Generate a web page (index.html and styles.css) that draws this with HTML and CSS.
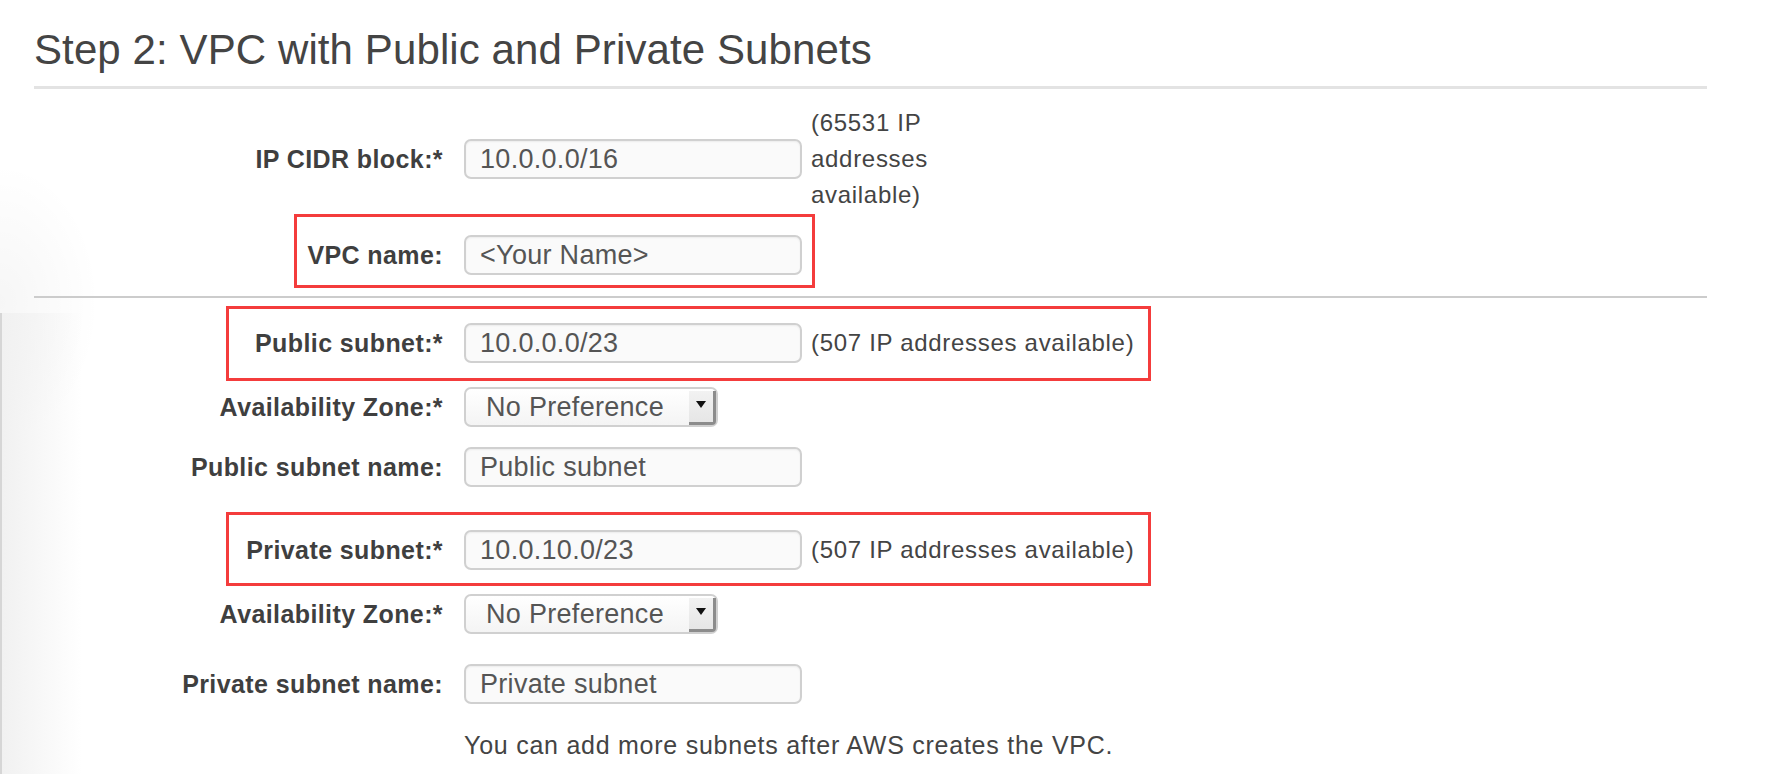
FILE: index.html
```html
<!DOCTYPE html>
<html lang="en">
<head>
<meta charset="utf-8">
<title>Step 2: VPC with Public and Private Subnets</title>
<link rel="stylesheet" href="styles.css">
</head>
<body>
<div class="glow"></div>
<div class="edge"></div>
<main class="page">
  <h1 class="title">Step 2: VPC with Public and Private Subnets</h1>

  <div class="row r1">
    <label class="lbl">IP CIDR block:*</label>
    <input class="field" type="text" value="10.0.0.0/16">
    <span class="hint narrow">(65531 IP addresses available)</span>
  </div>

  <div class="row r2">
    <label class="lbl">VPC name:</label>
    <input class="field" type="text" value="&lt;Your Name&gt;">
    <div class="mark mark-vpc"></div>
  </div>

  <div class="sep"></div>

  <div class="row r3">
    <label class="lbl">Public subnet:*</label>
    <input class="field" type="text" value="10.0.0.0/23">
    <span class="hint">(507 IP addresses available)</span>
    <div class="mark mark-sub"></div>
  </div>

  <div class="row r4">
    <label class="lbl">Availability Zone:*</label>
    <div class="select"><span class="sel-text">No Preference</span><span class="sel-btn"><span class="tri"></span></span></div>
  </div>

  <div class="row r5">
    <label class="lbl">Public subnet name:</label>
    <input class="field" type="text" value="Public subnet">
  </div>

  <div class="row r6">
    <label class="lbl">Private subnet:*</label>
    <input class="field" type="text" value="10.0.10.0/23">
    <span class="hint">(507 IP addresses available)</span>
    <div class="mark mark-sub2"></div>
  </div>

  <div class="row r7">
    <label class="lbl">Availability Zone:*</label>
    <div class="select"><span class="sel-text">No Preference</span><span class="sel-btn"><span class="tri"></span></span></div>
  </div>

  <div class="row r8">
    <label class="lbl">Private subnet name:</label>
    <input class="field" type="text" value="Private subnet">
  </div>

  <p class="note">You can add more subnets after AWS creates the VPC.</p>
</main>
</body>
</html>
```

FILE: styles.css
```css
html, body {
  margin: 0;
  padding: 0;
  background: #ffffff;
}

body {
  position: relative;
  font-family: "Liberation Sans", Arial, Helvetica, sans-serif;
  color: #444444;
  height: 774px;
  overflow: hidden;
}

.glow {
  position: absolute;
  left: 0;
  top: 110px;
  width: 120px;
  height: 320px;
  background: radial-gradient(ellipse 100px 140px at 0% 60%, rgba(0, 0, 0, 0.035), rgba(0, 0, 0, 0) 100%);
  pointer-events: none;
}

.edge {
  position: absolute;
  left: 0;
  top: 313px;
  bottom: 0;
  width: 80px;
  border-left: 2px solid #d6d6d6;
  background: linear-gradient(to right, #f1f1f1 0, rgba(255, 255, 255, 0) 80px);
  pointer-events: none;
}

.page {
  position: relative;
  margin-left: 34px;
  width: 1673px;
}

.title {
  margin: 0;
  padding-top: 26px;
  padding-bottom: 12px;
  font-size: 42px;
  letter-spacing: 0.1px;
  line-height: 48px;
  font-weight: normal;
  color: #444444;
  border-bottom: 3px solid #e3e3e3;
}

.row {
  position: relative;
  display: flex;
  align-items: center;
}

.lbl {
  flex: none;
  width: 409px;
  margin-right: 21px;
  text-align: right;
  font-weight: bold;
  font-size: 25px;
  letter-spacing: 0.4px;
  color: #3f3f3f;
}

.field {
  flex: none;
  box-sizing: border-box;
  width: 338px;
  height: 40px;
  margin: 0;
  padding: 0 0 0 14px;
  border: 2px solid #d0d0d0;
  border-radius: 7px;
  background: #fafafa;
  box-shadow: inset 0 1px 2px rgba(0, 0, 0, 0.06);
  font-family: inherit;
  font-size: 27px;
  letter-spacing: 0.3px;
  color: #555555;
  outline: none;
}

.hint {
  margin-left: 9px;
  font-size: 24px;
  letter-spacing: 0.7px;
  line-height: 36px;
  color: #444444;
  white-space: nowrap;
}

.hint.narrow {
  width: 128px;
  white-space: normal;
}

.select {
  flex: none;
  position: relative;
  box-sizing: border-box;
  width: 254px;
  height: 40px;
  border: 2px solid #d0d0d0;
  border-radius: 7px;
  background: linear-gradient(#ffffff, #f4f4f4);
  display: flex;
  align-items: center;
  justify-content: space-between;
}

.sel-text {
  padding-left: 20px;
  font-size: 27px;
  letter-spacing: 0.3px;
  color: #555555;
}

.sel-btn {
  box-sizing: border-box;
  align-self: stretch;
  width: 27px;
  margin: 2px 0 0 0;
  border-right: 3px solid #8c8c8c;
  border-bottom: 3px solid #8c8c8c;
  border-bottom-right-radius: 4px;
  background: linear-gradient(#f2f2f2, #e6e6e6);
  display: flex;
  justify-content: center;
  padding-top: 10px;
}

.tri {
  width: 0;
  height: 0;
  border-left: 5px solid transparent;
  border-right: 5px solid transparent;
  border-top: 7px solid #111111;
}

.mark {
  position: absolute;
  box-sizing: border-box;
  border: 3px solid #f43c3c;
  pointer-events: none;
}

.mark-vpc {
  left: 260px;
  top: -21px;
  width: 521px;
  height: 74px;
}

.mark-sub {
  left: 192px;
  top: -17px;
  width: 925px;
  height: 75px;
}

.mark-sub2 {
  left: 192px;
  top: -18px;
  width: 925px;
  height: 74px;
}

.sep {
  margin-top: 21px;
  border-top: 2px solid #cccccc;
}

.r1 { margin-top: 16px; }
.r2 { margin-top: 22px; }
.r3 { margin-top: 25px; }
.r4 { margin-top: 24px; }
.r5 { margin-top: 20px; }
.r6 { margin-top: 43px; }
.r7 { margin-top: 24px; }
.r8 { margin-top: 30px; }

.note {
  margin: 26px 0 0 430px;
  font-size: 25px;
  letter-spacing: 0.75px;
  line-height: 30px;
  color: #444444;
}
```
